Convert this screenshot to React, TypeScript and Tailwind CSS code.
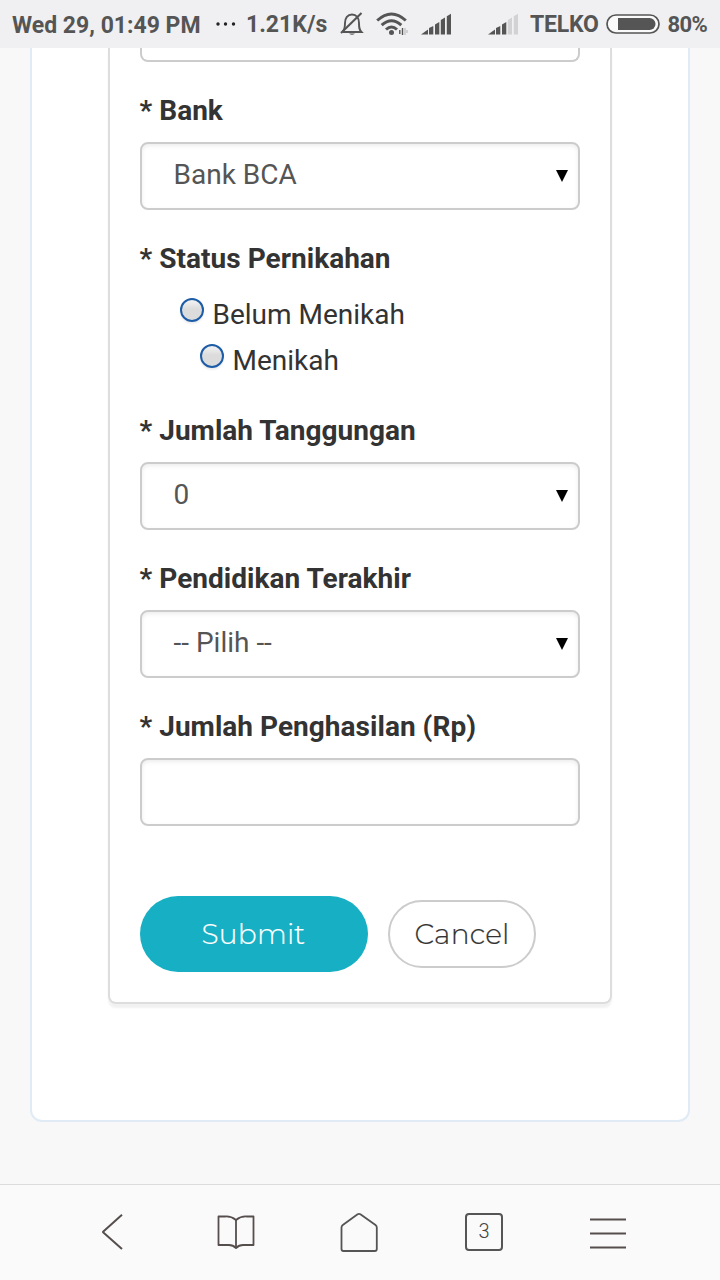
import React from "react";

function Label({ children }: { children: React.ReactNode }) {
  return <div className="-ml-[0.5px] h-10 pt-px text-[28px] leading-10 font-bold tracking-[0.03px] text-[#333]">{children}</div>;
}

const field =
  "mt-3 flex h-[68px] w-[440px] items-center justify-between rounded-lg border-2 border-[#ccc] bg-white shadow-[inset_0_2px_4px_rgba(0,0,0,0.075)]";

function Select({ value }: { value: string }) {
  return (
    <button type="button" className={field}>
      <span className="pb-[3px] pl-[31.5px] text-[28px] leading-8 text-[#555]">{value}</span>
      <svg className="mr-2.5 h-3 w-3" viewBox="0 0 12 12">
        <path d="M0 0h12L6 12z" fill="#000" />
      </svg>
    </button>
  );
}

function Radio({ children, className }: { children: string; className: string }) {
  return (
    <label className={`flex h-[46px] items-center ${className}`}>
      <span className="mr-[8.5px] mb-2 h-6 w-6 rounded-full border-2 border-[#1d5ca6] bg-linear-to-b from-[#efefef] from-10% to-[#dcdcdc] to-45% shadow-[0_2px_2px_rgba(0,0,0,0.07)]" />
      <span className="pt-0.5 text-[28px] leading-[46px] text-[#333]">{children}</span>
    </label>
  );
}

function Signal({ dim, className }: { dim: boolean; className: string }) {
  const faded = dim ? "#d2d2d4" : "#555";
  return (
    <svg className={`h-6 w-[30px] shrink-0 ${className}`} viewBox="0 0 30 24">
      <path d="M0 22.500l7-5v5z" fill="#555" />
      <path d="M8 16l4.300-2v8.500h-4.300z M14 12.500l4.300-2.500v12.500h-4.300z" fill="#555" />
      <path d="M19.800 8l4.200-2.500v17h-4.200z M25.800 4.300l4.200-2.500v20.700h-4.200z" fill={faded} />
    </svg>
  );
}

function StatusBar() {
  return (
    <header className="flex h-12 shrink-0 items-center bg-[#f0f0f2] pl-3 font-bold whitespace-nowrap text-[#555]">
      <span className="w-[188px] pt-[3px] text-[23px] leading-7">Wed 29, 01:49 PM</span>
      <svg className="ml-4 h-1 w-5" viewBox="0 0 20 4">
        <circle cx="2" cy="2" r="1.7" fill="#222" />
        <circle cx="9.500" cy="2" r="1.7" fill="#222" />
        <circle cx="17.500" cy="2" r="1.7" fill="#222" />
      </svg>
      <span className="ml-[10px] w-[82px] pt-0.5 text-[23px] leading-7">1.21K/s</span>
      <svg className="ml-3 h-6 w-6" viewBox="0 0 24 24" fill="none" stroke="#555" strokeWidth="1.900">
        <path d="M2.500 20C5 17.500 5 15 5 11c0-5 2.600-8.500 7-8.500S19 6 19 11c0 4.500 0 6.500 2.500 9H2.500" />
        <path d="M1 21L21.500 1" strokeWidth="2.100" />
        <path d="M9 21.500q3 2.500 6 0z" fill="#555" stroke="none" />
      </svg>
      <svg className="ml-3 h-6 w-8" viewBox="0 0 32 24" fill="none" stroke="#555" strokeWidth="3">
        <path d="M1.200 8.500q14.300-13 28.600 0M5.700 13.200q9.800-9 19.600 0M10 17.500q5.500-5 11 0" />
        <circle cx="15.500" cy="20.500" r="2.500" fill="#555" stroke="none" />
        <path d="M23.800 18v4M26.500 16v7" strokeWidth="1.400" />
        <path d="M29 16v7M31 18v3" strokeWidth="1.400" stroke="#c4c4c6" />
      </svg>
      <Signal dim={false} className="ml-[12.500px]" />
      <Signal dim className="ml-[37px]" />
      <span className="ml-[12.500px] w-[70px] pt-0.5 text-[23px] leading-7 tracking-[-0.200px]">TELKO</span>
      <svg className="ml-[5.500px] h-5 w-[54px]" viewBox="0 0 54 20">
        <rect x="1" y="1" width="52" height="18" rx="9" fill="#fafafa" stroke="#555" strokeWidth="1.700" />
        <path d="M12 4h31.500a6 6 0 010 12H12z" fill="#555" />
      </svg>
      <span className="ml-2 pt-0.5 text-[22px] leading-7 tracking-[-0.600px]">80%</span>
    </header>
  );
}

function NavBar() {
  return (
    <nav className="flex h-24 shrink-0 items-center border-t border-[#dcdcdc] bg-[#fafafa] pb-0.5 pl-[100px]">
      <svg className="h-10 w-6" viewBox="0 0 24 40" fill="none" stroke="#554e4c" strokeWidth="2" strokeLinejoin="bevel">
        <path d="M22 2.800L2.800 20L22 37" />
      </svg>
      <svg className="ml-[93px] h-10 w-10" viewBox="0 0 40 40" fill="none" stroke="#554e4c" strokeWidth="1.800" strokeLinejoin="round">
        <path d="M19 8Q14 4 8 4.500H1.500v28.500H12q4 0 7 3 3-3 7-3h10.500V4.500H30q-6-.5-11 3.500z" />
        <path d="M19 8v28" />
      </svg>
      <svg className="ml-[83px] h-10 w-10" viewBox="0 0 40 40" fill="none" stroke="#555" strokeWidth="1.800" strokeLinejoin="round">
        <path d="M17.600 2.300Q19 1.300 20.400 2.300L35.500 13q1.300 1 1.300 2.500V37q0 2-2 2H3.500q-2 0-2-2V15.500q0-1.500 1.300-2.500z" />
      </svg>
      <div className="ml-[85px] flex h-[38px] w-[38px] items-center justify-center rounded border-2 border-[#555] pb-px text-[20px] font-light text-[#444]">
        3
      </div>
      <svg className="mt-1 ml-[87px] h-10 w-9" viewBox="0 0 36 40" stroke="#554e4c" strokeWidth="2.200">
        <path d="M0 5.500h36M0 19.500h36M0 33.500h36" />
      </svg>
    </nav>
  );
}

const buttonText =
  "font-[Montserrat,Inter,sans-serif] text-[28px] leading-8 font-light tracking-[0.2px] [-webkit-text-stroke:0.2px]";

export default function App() {
  return (
    <div className="flex h-[1280px] w-[720px] flex-col overflow-hidden bg-[#f8f8f8] font-[Roboto,sans-serif]">
      <StatusBar />
      <main className="flex-1 px-[30px]">
        <section className="h-[1074px] rounded-b-xl border-2 border-t-0 border-[#e0ebf5] bg-white px-[76px]">
          <form className="h-[956px] rounded-b-lg border-2 border-t-0 border-[#ddd] bg-white px-[30px] shadow-[0_4px_2px_rgba(0,0,0,0.055)]">
            <div className="h-[14px] w-[440px] rounded-b-lg border-2 border-t-0 border-[#ccc]" />
            <div className="pt-7">
              <Label>* Bank</Label>
              <Select value="Bank BCA" />
            </div>
            <div className="pt-7 pb-[27px]">
              <Label>* Status Pernikahan</Label>
              <div className="pt-[13px]">
                <Radio className="pl-10">Belum Menikah</Radio>
                <Radio className="pl-[60px]">Menikah</Radio>
              </div>
            </div>
            <div>
              <Label>* Jumlah Tanggungan</Label>
              <Select value="0" />
            </div>
            <div className="pt-7">
              <Label>* Pendidikan Terakhir</Label>
              <Select value="-- Pilih --" />
            </div>
            <div className="pt-7">
              <Label>* Jumlah Penghasilan (Rp)</Label>
              <input className={field} />
            </div>
            <div className="flex items-center gap-5 pt-[70px]">
              <button type="button" className={`h-[76px] w-[228px] rounded-full bg-[#17afc3] pr-px text-white ${buttonText}`}>
                Submit
              </button>
              <button type="button" className={`h-[68px] w-[148px] rounded-full border-2 border-[#ccc] bg-white text-[#333] ${buttonText}`}>
                Cancel
              </button>
            </div>
          </form>
        </section>
      </main>
      <NavBar />
    </div>
  );
}
